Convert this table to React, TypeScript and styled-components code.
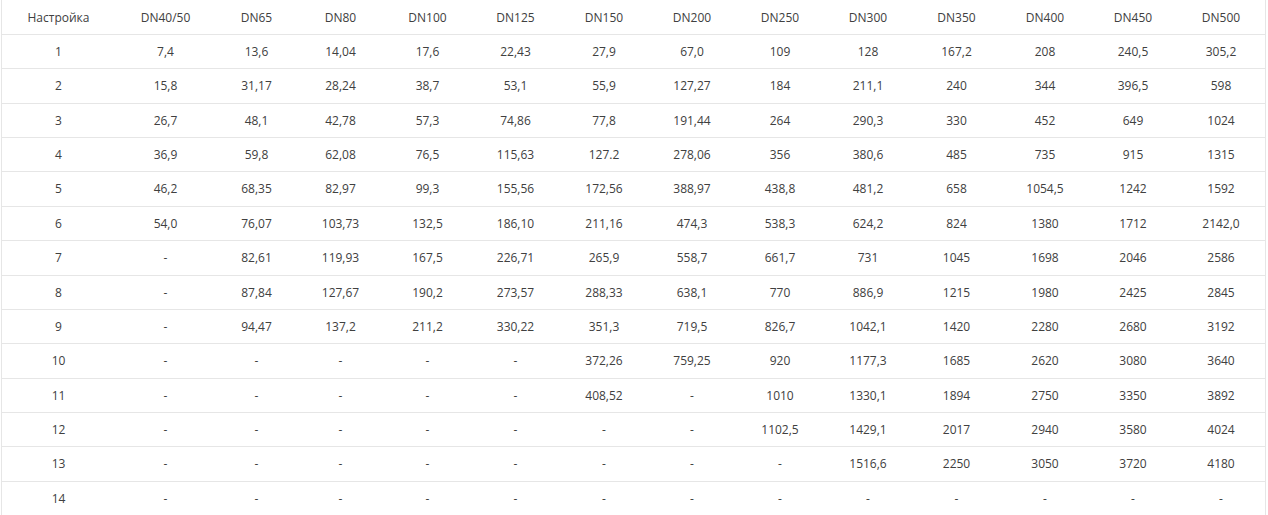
import styled, { createGlobalStyle } from 'styled-components';

const COLUMNS = [
  'Настройка', 'DN40/50', 'DN65', 'DN80', 'DN100', 'DN125', 'DN150',
  'DN200', 'DN250', 'DN300', 'DN350', 'DN400', 'DN450', 'DN500',
];

const COL_WIDTHS = [113, 101, 81, 87, 87, 89, 88, 88, 88, 88, 89, 88, 88, 88];

const ROWS = [
  ['1', '7,4', '13,6', '14,04', '17,6', '22,43', '27,9', '67,0', '109', '128', '167,2', '208', '240,5', '305,2'],
  ['2', '15,8', '31,17', '28,24', '38,7', '53,1', '55,9', '127,27', '184', '211,1', '240', '344', '396,5', '598'],
  ['3', '26,7', '48,1', '42,78', '57,3', '74,86', '77,8', '191,44', '264', '290,3', '330', '452', '649', '1024'],
  ['4', '36,9', '59,8', '62,08', '76,5', '115,63', '127.2', '278,06', '356', '380,6', '485', '735', '915', '1315'],
  ['5', '46,2', '68,35', '82,97', '99,3', '155,56', '172,56', '388,97', '438,8', '481,2', '658', '1054,5', '1242', '1592'],
  ['6', '54,0', '76,07', '103,73', '132,5', '186,10', '211,16', '474,3', '538,3', '624,2', '824', '1380', '1712', '2142,0'],
  ['7', '-', '82,61', '119,93', '167,5', '226,71', '265,9', '558,7', '661,7', '731', '1045', '1698', '2046', '2586'],
  ['8', '-', '87,84', '127,67', '190,2', '273,57', '288,33', '638,1', '770', '886,9', '1215', '1980', '2425', '2845'],
  ['9', '-', '94,47', '137,2', '211,2', '330,22', '351,3', '719,5', '826,7', '1042,1', '1420', '2280', '2680', '3192'],
  ['10', '-', '-', '-', '-', '-', '372,26', '759,25', '920', '1177,3', '1685', '2620', '3080', '3640'],
  ['11', '-', '-', '-', '-', '-', '408,52', '-', '1010', '1330,1', '1894', '2750', '3350', '3892'],
  ['12', '-', '-', '-', '-', '-', '-', '-', '1102,5', '1429,1', '2017', '2940', '3580', '4024'],
  ['13', '-', '-', '-', '-', '-', '-', '-', '-', '1516,6', '2250', '3050', '3720', '4180'],
  ['14', '-', '-', '-', '-', '-', '-', '-', '-', '-', '-', '-', '-', '-'],
];

const GlobalStyle = createGlobalStyle`
  body {
    margin: 0;
    background: #ffffff;
    font-family: 'Open Sans', 'Liberation Sans', sans-serif;
    overflow: hidden;
  }
`;

const App = () => {
  return (
    <>
      <GlobalStyle />
      <Wrapper>
        <Table>
          <colgroup>
            {COL_WIDTHS.map((w, index) => (
              <col key={index} style={{ width: w }} />
            ))}
          </colgroup>
          <thead>
            <tr>
              {COLUMNS.map((title) => (
                <HeadCell key={title}>{title}</HeadCell>
              ))}
            </tr>
          </thead>
          <tbody>
            {ROWS.map((row) => (
              <tr key={row[0]}>
                {row.map((value, index) => (
                  <Cell key={index}>{value}</Cell>
                ))}
              </tr>
            ))}
          </tbody>
        </Table>
      </Wrapper>
    </>
  );
};

const Wrapper = styled.div`
  padding-left: 1px;
`;

const Table = styled.table`
  width: 1265px;
  table-layout: fixed;
  border-collapse: separate;
  border-spacing: 0;
  border-left: 1px solid #e6e6e6;
  border-right: 1px solid #e6e6e6;
`;

const HeadCell = styled.th`
  padding: 8.6px 2px 8px;
  font-size: 12px;
  font-weight: 400;
  line-height: 17.38px;
  color: #404040;
  text-align: center;
  white-space: nowrap;
  border-bottom: 1px solid #e6e6e6;
`;

const Cell = styled.td`
  padding: 8px 2px;
  font-size: 12px;
  line-height: 17.38px;
  color: #404040;
  text-align: center;
  white-space: nowrap;
  border-bottom: 1px solid #e6e6e6;
`;

export default App;
